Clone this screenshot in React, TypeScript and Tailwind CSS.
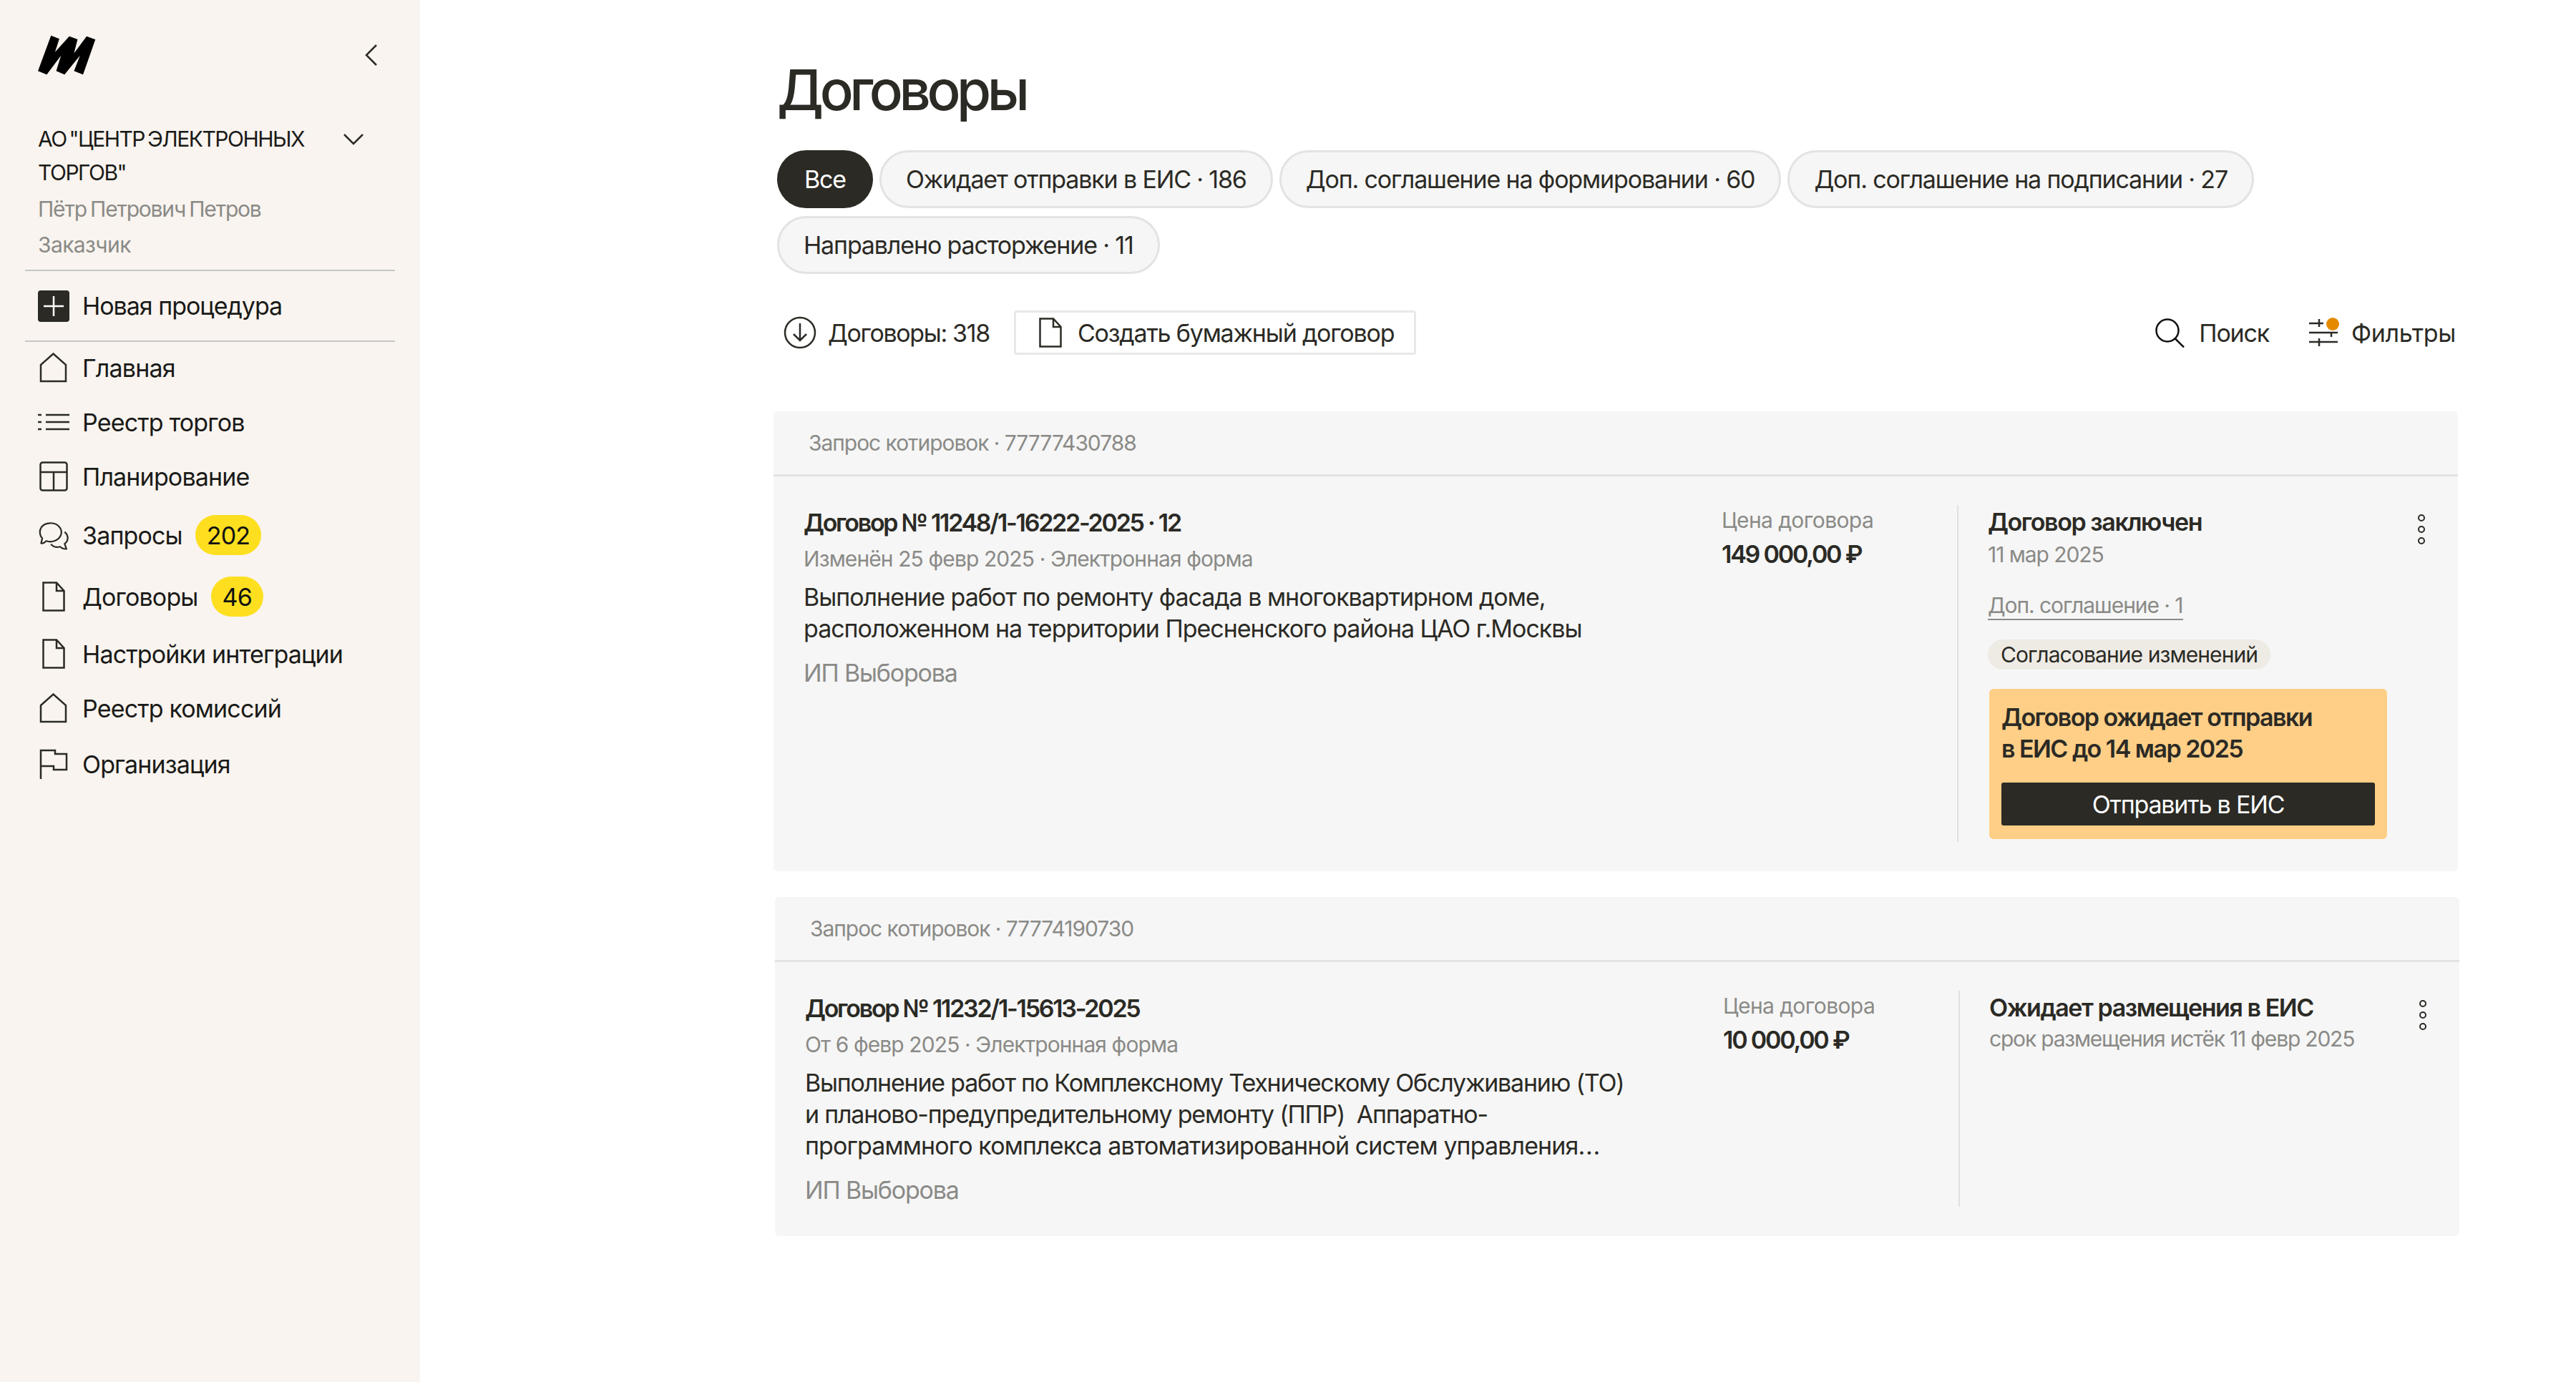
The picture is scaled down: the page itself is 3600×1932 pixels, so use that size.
import React from "react";

const stroke = "#2b2a25";

function Logo() {
  return (
    <svg width="87" height="58" viewBox="30 25 260 175" fill="#000">
      <path d="M93 30 128 44 110 100 170 33 205 46 190 105 243 33 280 47 228 195 190 180 215 115 150 195 115 180 135 115 75 195 38 180Z" />
    </svg>
  );
}

function Home() {
  return (
    <svg width="40" height="42" viewBox="0 0 40 42" fill="none" stroke={stroke} strokeWidth="2.5">
      <path d="M2 40V17L19.5 1.5 37 17V40Z" />
    </svg>
  );
}
function ListIcon() {
  return (
    <svg width="44" height="24" viewBox="0 0 44 24" fill="none" stroke={stroke} strokeWidth="2.5">
      <path d="M11 2H44M11 12H44M11 22H44M0 2H5M0 12H5M0 22H5" />
    </svg>
  );
}
function Layout() {
  return (
    <svg width="40" height="42" viewBox="0 0 40 42" fill="none" stroke={stroke} strokeWidth="2.5">
      <rect x="1.5" y="1.5" width="37" height="39" rx="3" />
      <path d="M1.5 15H38.5M20 15V40.5" />
    </svg>
  );
}
function Chat() {
  return (
    <svg width="46" height="44" viewBox="33 18 138 132" fill="none" stroke={stroke} strokeWidth="7" strokeLinejoin="round">
      <path d="M47 120 52 98C40 85 38 65 48 50 62 28 110 22 130 52 145 75 130 102 105 110 90 115 78 113 70 110 62 118 55 122 47 120Z" />
      <path d="M150 70C168 85 168 110 150 122L158 145C145 145 135 140 130 135 115 140 100 135 90 124" />
    </svg>
  );
}
function Doc({ w = 32, h = 42 }: { w?: number; h?: number }) {
  return (
    <svg width={w} height={h} viewBox="0 0 32 42" fill="none" stroke={stroke} strokeWidth="2.5">
      <path d="M1.5 1.5H20L30.5 13V40.5H1.5Z" />
      <path d="M20 1.5V13H30.5" />
    </svg>
  );
}
function Flag() {
  return (
    <svg width="40" height="42" viewBox="0 0 40 42" fill="none" stroke={stroke} strokeWidth="2.5">
      <path d="M2 42V2H22V7H38V29H20V24H2" />
    </svg>
  );
}

function NavItem({ icon, label, badge, cls }: { icon: React.ReactNode; label: string; badge?: string; cls: string }) {
  return (
    <div className={`flex items-center ${cls}`}>
      <div className="w-[44px] flex justify-center shrink-0 mr-[18px]">{icon}</div>
      <span>{label}</span>
      {badge && (
        <span className="ml-[18px] h-[56px] px-[16px] rounded-full bg-[#fddf1f] flex items-center text-[#111]">{badge}</span>
      )}
    </div>
  );
}

function Sidebar() {
  return (
    <aside className="w-[587px] shrink-0 bg-[#f9f4ef] min-h-[1932px] text-[34px] tracking-[-0.03em] text-[#1a1a18]">
      <div className="flex items-center justify-between pl-[50px] pr-[58px] pt-[48px]">
        <Logo />
        <svg width="20" height="32" viewBox="0 0 20 32" fill="none" stroke={stroke} strokeWidth="2.5">
          <path d="M17 2 3 16l14 14" />
        </svg>
      </div>
      <div className="relative pl-[53px] pr-[120px] pt-[65px] text-[30px] leading-[47px] tracking-[-0.05em] [word-spacing:-3px]">
        <div>АО "ЦЕНТР ЭЛЕКТРОННЫХ ТОРГОВ"</div>
        <div className="text-[#8a8a87] text-[30px] leading-[50px] mt-[2px] tracking-[-0.04em] [word-spacing:-2px]">Пётр Петрович Петров</div>
        <div className="text-[#8a8a87] text-[30px] leading-[50px] tracking-[-0.02em]">Заказчик</div>
        <svg className="absolute right-[78px] top-[80px]" width="30" height="18" viewBox="0 0 30 18" fill="none" stroke={stroke} strokeWidth="2.5">
          <path d="M2 2l13 13L28 2" />
        </svg>
      </div>
      <div className="mx-[35px] mt-[10px] h-[2px] bg-[#c6c6c4]" />
      <div className="flex items-center pl-[53px] h-[97px]">
        <div className="w-[44px] h-[44px] rounded-[4px] bg-[#2b2a25] flex items-center justify-center mr-[18px]">
          <svg width="28" height="28" viewBox="0 0 28 28" stroke="#fff" strokeWidth="2.5"><path d="M14 0V28M0 14H28" /></svg>
        </div>
        <span>Новая процедура</span>
      </div>
      <div className="mx-[35px] h-[2px] bg-[#c6c6c4]" />
      <nav className="pl-[53px] tracking-[-0.025em]">
        <NavItem icon={<Home />} label="Главная" cls="h-[74px] pb-[2px]" />
        <NavItem icon={<ListIcon />} label="Реестр торгов" cls="h-[76px]" />
        <NavItem icon={<Layout />} label="Планирование" cls="h-[76px]" />
        <NavItem icon={<Chat />} label="Запросы" badge="202" cls="h-[88px]" />
        <NavItem icon={<Doc />} label="Договоры" badge="46" cls="h-[84px]" />
        <NavItem icon={<Doc />} label="Настройки интеграции" cls="h-[76px]" />
        <NavItem icon={<Home />} label="Реестр комиссий" cls="h-[76px]" />
        <NavItem icon={<Flag />} label="Организация" cls="h-[80px]" />
      </nav>
    </aside>
  );
}

const pills = [
  "Ожидает отправки в ЕИС · 186",
  "Доп. соглашение на формировании · 60",
  "Доп. соглашение на подписании · 27",
  "Направлено расторжение · 11",
];

function Card({
  cls,
  header,
  title,
  sub,
  desc,
  price,
  children,
  bodyH,
}: {
  cls: string;
  header: string;
  title: string;
  sub: string;
  desc: React.ReactNode;
  price: string;
  children: React.ReactNode;
  bodyH: string;
}) {
  return (
    <section className={`bg-[#f6f6f6] rounded-[6px] ${cls}`}>
      <div className="h-[91px] border-b-[3px] border-[#e3e3e3] pl-[49px] flex items-center text-[30px] text-[#8a8a87] tracking-[-0.035em]">
        {header}
      </div>
      <div className={`flex pl-[42px] pt-[43px] ${bodyH}`}>
        <div className="w-[1283px] shrink-0">
          <div className="text-[34px] font-semibold leading-[44px] tracking-[-0.067em] text-[#2b2a25]">{title}</div>
          <div className="text-[30px] leading-[44px] mt-[6px] text-[#8a8a87] tracking-[-0.03em]">{sub}</div>
          <div className="text-[34px] leading-[44px] mt-[10px] text-[#2b2a25] tracking-[-0.03em]">{desc}</div>
          <div className="text-[34px] leading-[44px] mt-[18px] text-[#8a8a87] tracking-[-0.035em]">ИП Выборова</div>
        </div>
        <div className="w-[329px] shrink-0 -mt-[2px]">
          <div className="text-[30px] leading-[40px] text-[#8a8a87] tracking-[-0.02em]">Цена договора</div>
          <div className="text-[34px] leading-[44px] mt-[6px] font-semibold text-[#2b2a25] tracking-[-0.065em]">{price}</div>
        </div>
        <div className="relative flex-1 border-l-[2px] border-[#e0e0e0] pl-[41px] -mt-[3px] mb-[41px]">
          {children}
          <div className="absolute left-[642px] top-[13px] flex flex-col gap-[6px]">
            <span className="w-[10px] h-[10px] rounded-full border-[2.5px] border-[#2b2a25]" />
            <span className="w-[10px] h-[10px] rounded-full border-[2.5px] border-[#2b2a25]" />
            <span className="w-[10px] h-[10px] rounded-full border-[2.5px] border-[#2b2a25]" />
          </div>
        </div>
      </div>
    </section>
  );
}

export default function App() {
  return (
    <div className="flex w-[3600px] h-[1932px] bg-white overflow-hidden font-['Inter','Noto_Sans',sans-serif] text-[#2b2a25]">
      <Sidebar />
      <main className="pl-[494px] w-[2850px] shrink-0">
        <div className="pl-[5px]">
          <h1 className="text-[78px] font-medium leading-[100px] pt-[76px] tracking-[-0.07em]">Договоры</h1>
          <div className="flex flex-wrap gap-x-[9px] gap-y-[11px] mt-[34px] text-[34px] tracking-[-0.034em]">
            <span className="h-[81px] px-[38px] rounded-full bg-[#2b2a25] text-white flex items-center">Все</span>
            {pills.map((p) => (
              <span key={p} className="h-[81px] px-[34px] rounded-full bg-[#f6f6f6] border-[3px] border-[#e3e3e3] flex items-center">
                {p}
              </span>
            ))}
          </div>
          <div className="flex items-center mt-[51px] h-[62px] text-[34px] tracking-[-0.035em]">
            <svg className="ml-[9px] mr-[16px]" width="46" height="46" viewBox="0 0 46 46" fill="none" stroke={stroke} strokeWidth="2.5">
              <circle cx="23" cy="23" r="21" />
              <path d="M23 10V34M14 25l9 9 9-9" />
            </svg>
            <span className="tracking-[-0.04em]">Договоры: 318</span>
            <button className="ml-[34px] h-[62px] w-[562px] bg-white border-[3px] border-[#e8e8e8] rounded-[4px] flex items-center pl-[32px]">
              <Doc w={32} h={42} />
              <span className="ml-[22px]">Создать бумажный договор</span>
            </button>
            <div className="flex-1" />
            <svg width="41" height="41" viewBox="0 0 41 41" fill="none" stroke="#111" strokeWidth="2.5">
              <circle cx="17" cy="17" r="15.5" />
              <path d="M27.5 28 40 40.5" />
            </svg>
            <span className="ml-[20px] mr-[55px]">Поиск</span>
            <div className="relative w-[42px] h-[42px] mr-[18px]">
              <svg width="42" height="42" viewBox="0 0 42 42" fill="none" stroke={stroke} strokeWidth="2.5">
                <path d="M1 8H21M1 21H41M1 34H41M15 2V13M15 29V40M32 21V27" />
              </svg>
              <span className="absolute right-[-1px] top-[0px] w-[18px] h-[18px] rounded-full bg-[#e58a00]" />
            </div>
            <span className="mr-[5px] tracking-[-0.01em]">Фильтры</span>
          </div>
        </div>

        <Card
          cls="mt-[79px] w-[2354px]"
          header="Запрос котировок · 77777430788"
          title="Договор № 11248/1-16222-2025 · 12"
          sub="Изменён 25 февр 2025 · Электронная форма"
          desc={<>Выполнение работ по ремонту фасада в многоквартирном доме,<br />расположенном на территории Пресненского района ЦАО г.Москвы</>}
          price="149 000,00 ₽"
          bodyH="h-[552px]"
        >
          <div className="text-[34px] leading-[44px] font-semibold tracking-[-0.042em] pt-[2px]">Договор заключен</div>
          <div className="text-[30px] leading-[40px] mt-[3px] text-[#8a8a87] tracking-[-0.035em]">11 мар 2025</div>
          <div className="mt-[32px] text-[30px] leading-[38px] text-[#8a8a87] tracking-[-0.035em] border-b-[2px] border-[#8a8a87] w-fit">Доп. соглашение · 1</div>
          <div className="mt-[27px] h-[42px] w-fit px-[18px] rounded-full bg-[#eeebe5] flex items-center text-[30px] tracking-[-0.03em]">Согласование изменений</div>
          <div className="mt-[27px] ml-[2px] w-[556px] h-[210px] bg-[#ffcf87] rounded-[6px] pt-[18px] px-[17px]">
            <div className="text-[34px] leading-[44px] font-semibold tracking-[-0.045em]">Договор ожидает отправки<br />в ЕИС до 14 мар 2025</div>
            <button className="mt-[25px] w-full h-[60px] bg-[#2b2a25] text-white rounded-[3px] text-[34px] tracking-[-0.035em]">Отправить в ЕИС</button>
          </div>
        </Card>

        <Card
          cls="mt-[36px] ml-[2px] w-[2354px]"
          header="Запрос котировок · 77774190730"
          title="Договор № 11232/1-15613-2025"
          sub="От 6 февр 2025 · Электронная форма"
          desc={<><span className="tracking-[-0.036em]">Выполнение работ по Комплексному Техническому Обслуживанию (ТО)<br />и планово-предупредительному ремонту (ППР) &nbsp;Аппаратно-</span><br /><span className="tracking-[-0.026em]">программного комплекса автоматизированной систем управления</span><span className="tracking-[0.02em]">...</span></>}
          price="10 000,00 ₽"
          bodyH="h-[383px]"
        >
          <div className="text-[34px] leading-[44px] font-semibold tracking-[-0.042em] pt-[2px]">Ожидает размещения в ЕИС</div>
          <div className="text-[30px] leading-[40px] mt-[1px] text-[#8a8a87] tracking-[-0.04em]">срок размещения истёк 11 февр 2025</div>
        </Card>
      </main>
    </div>
  );
}
